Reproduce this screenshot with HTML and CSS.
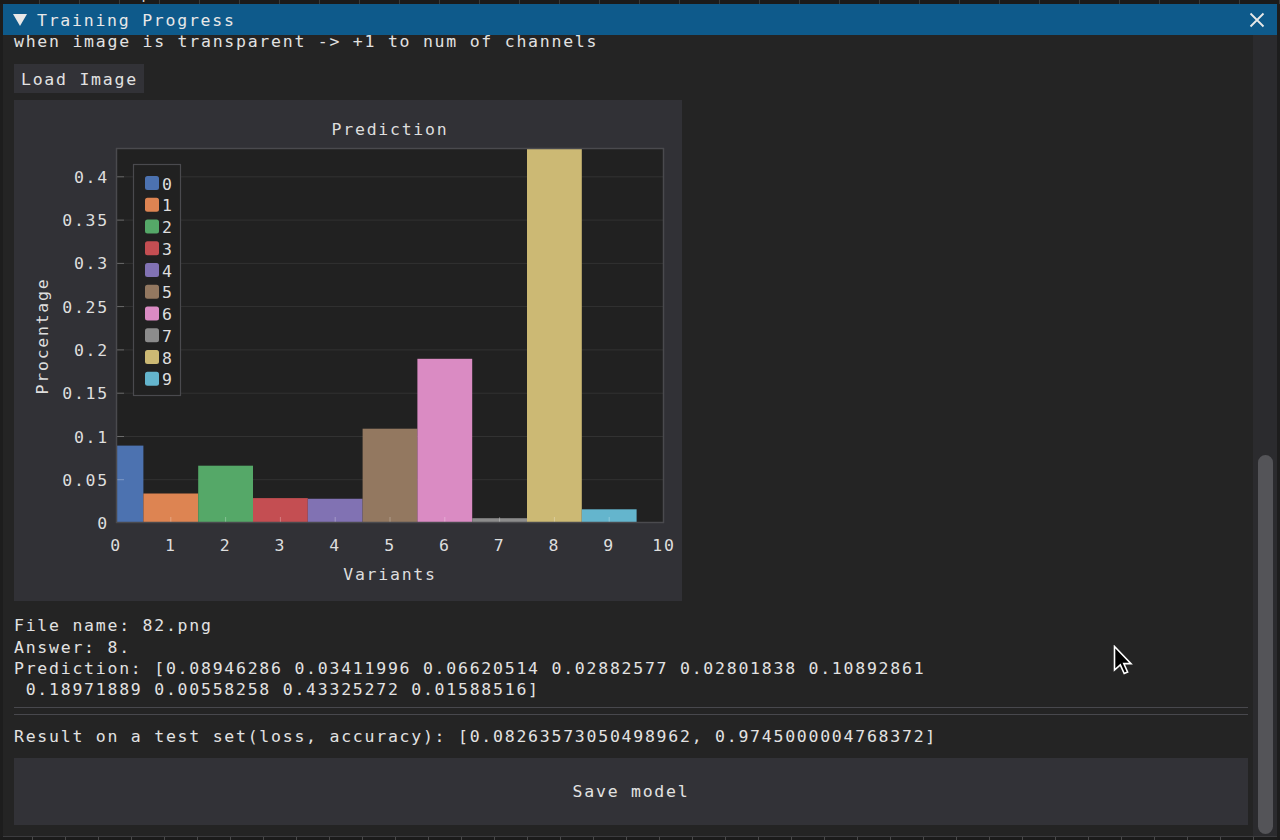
FILE: index.html
```html
<!DOCTYPE html>
<html>
<head>
<meta charset="utf-8">
<title>Training Progress</title>
<link rel="stylesheet" href="styles.css">
</head>
<body>
<div class="desktop">
  <div class="bg-top"><span class="bg-top-label">Input</span></div>
  <div class="window">
    <div class="titlebar">
      <svg class="collapse-icon" width="14" height="12" viewBox="0 0 14 12"><polygon points="0,0 14,0 7,12" fill="#e8e8e8"/></svg>
      <span class="title">Training Progress</span>
      <svg class="close-icon" width="16" height="16" viewBox="0 0 16 16"><path d="M1.5 1.5 L14.5 14.5 M14.5 1.5 L1.5 14.5" stroke="#e8e8e8" stroke-width="1.8" fill="none"/></svg>
    </div>
    <div class="win-body">
      <div class="content">
        <div class="scrolled">
          <p class="line">when image is transparent -&gt; +1 to num of channels</p>
          <button class="btn btn-load">Load Image</button>
          <div class="plot-frame">
            <svg class="plot" width="668" height="501" viewBox="0 0 668 501">
              <defs>
                <clipPath id="area"><rect x="102" y="48" width="548" height="375"/></clipPath>
              </defs>
              <text class="plot-title" x="376" y="29">Prediction</text>
              <rect x="102" y="48" width="548" height="375" fill="#212121"/>
              <g stroke="#323232" stroke-width="1">
                <line x1="102" y1="379.7" x2="650" y2="379.7"/>
                <line x1="102" y1="336.5" x2="650" y2="336.5"/>
                <line x1="102" y1="293.2" x2="650" y2="293.2"/>
                <line x1="102" y1="249.9" x2="650" y2="249.9"/>
                <line x1="102" y1="206.6" x2="650" y2="206.6"/>
                <line x1="102" y1="163.4" x2="650" y2="163.4"/>
                <line x1="102" y1="120.1" x2="650" y2="120.1"/>
                <line x1="102" y1="76.8" x2="650" y2="76.8"/>
              </g>
              <g clip-path="url(#area)">
                <rect x="74.6" y="345.6" width="54.8" height="77.4" fill="#4c72b0"/>
                <rect x="129.4" y="393.5" width="54.8" height="29.5" fill="#dd8452"/>
                <rect x="184.2" y="365.7" width="54.8" height="57.3" fill="#55a868"/>
                <rect x="239" y="398.1" width="54.8" height="24.9" fill="#c44e52"/>
                <rect x="293.8" y="398.75" width="54.8" height="24.25" fill="#8172b3"/>
                <rect x="348.6" y="328.7" width="54.8" height="94.3" fill="#937860"/>
                <rect x="403.4" y="258.8" width="54.8" height="164.2" fill="#da8bc3"/>
                <rect x="458.2" y="418.2" width="54.8" height="4.8" fill="#8c8c8c"/>
                <rect x="513" y="48" width="54.8" height="375" fill="#ccb974"/>
                <rect x="567.8" y="409.3" width="54.8" height="13.7" fill="#64b5cd"/>
              </g>
              <g stroke="rgba(255,255,255,0.28)" stroke-width="1">
                <line x1="102" y1="379.7" x2="110" y2="379.7"/>
                <line x1="102" y1="336.5" x2="110" y2="336.5"/>
                <line x1="102" y1="293.2" x2="110" y2="293.2"/>
                <line x1="102" y1="249.9" x2="110" y2="249.9"/>
                <line x1="102" y1="206.6" x2="110" y2="206.6"/>
                <line x1="102" y1="163.4" x2="110" y2="163.4"/>
                <line x1="102" y1="120.1" x2="110" y2="120.1"/>
                <line x1="102" y1="76.8" x2="110" y2="76.8"/>
                <line x1="156.8" y1="423" x2="156.8" y2="417"/>
                <line x1="211.6" y1="423" x2="211.6" y2="417"/>
                <line x1="266.4" y1="423" x2="266.4" y2="417"/>
                <line x1="321.2" y1="423" x2="321.2" y2="417"/>
                <line x1="376" y1="423" x2="376" y2="417"/>
                <line x1="430.8" y1="423" x2="430.8" y2="417"/>
                <line x1="485.6" y1="423" x2="485.6" y2="417"/>
                <line x1="540.4" y1="423" x2="540.4" y2="417"/>
                <line x1="595.2" y1="423" x2="595.2" y2="417"/>
              </g>
              <rect x="102.5" y="48.5" width="547" height="374" fill="none" stroke="#4a4a4e" stroke-width="1.5"/>
              <g class="legend">
                <rect x="119.5" y="64.5" width="47" height="231" fill="#212121" stroke="#4a4a4e" stroke-width="1.2"/>
                <rect x="131" y="76" width="14" height="14" rx="2.5" fill="#4c72b0"/>
                <rect x="131" y="97.75" width="14" height="14" rx="2.5" fill="#dd8452"/>
                <rect x="131" y="119.5" width="14" height="14" rx="2.5" fill="#55a868"/>
                <rect x="131" y="141.25" width="14" height="14" rx="2.5" fill="#c44e52"/>
                <rect x="131" y="163" width="14" height="14" rx="2.5" fill="#8172b3"/>
                <rect x="131" y="184.75" width="14" height="14" rx="2.5" fill="#937860"/>
                <rect x="131" y="206.5" width="14" height="14" rx="2.5" fill="#da8bc3"/>
                <rect x="131" y="228.25" width="14" height="14" rx="2.5" fill="#8c8c8c"/>
                <rect x="131" y="250" width="14" height="14" rx="2.5" fill="#ccb974"/>
                <rect x="131" y="271.75" width="14" height="14" rx="2.5" fill="#64b5cd"/>
                <text class="lbl" x="148" y="84">0</text>
                <text class="lbl" x="148" y="105.75">1</text>
                <text class="lbl" x="148" y="127.5">2</text>
                <text class="lbl" x="148" y="149.25">3</text>
                <text class="lbl" x="148" y="171">4</text>
                <text class="lbl" x="148" y="192.75">5</text>
                <text class="lbl" x="148" y="214.5">6</text>
                <text class="lbl" x="148" y="236.25">7</text>
                <text class="lbl" x="148" y="258">8</text>
                <text class="lbl" x="148" y="279.75">9</text>
              </g>
              <g class="ylabels">
                <text x="95" y="77.3">0.4</text>
                <text x="95" y="120.6">0.35</text>
                <text x="95" y="163.9">0.3</text>
                <text x="95" y="207.1">0.25</text>
                <text x="95" y="250.4">0.2</text>
                <text x="95" y="293.7">0.15</text>
                <text x="95" y="337">0.1</text>
                <text x="95" y="380.2">0.05</text>
                <text x="95" y="423.5">0</text>
              </g>
              <g class="xlabels">
                <text x="102" y="445.5">0</text>
                <text x="156.8" y="445.5">1</text>
                <text x="211.6" y="445.5">2</text>
                <text x="266.4" y="445.5">3</text>
                <text x="321.2" y="445.5">4</text>
                <text x="376" y="445.5">5</text>
                <text x="430.8" y="445.5">6</text>
                <text x="485.6" y="445.5">7</text>
                <text x="540.4" y="445.5">8</text>
                <text x="595.2" y="445.5">9</text>
                <text x="650" y="445.5">10</text>
              </g>
              <text class="axis-title" x="376" y="474.5">Variants</text>
              <text class="axis-title" x="0" y="0" transform="translate(28 236) rotate(-90)">Procentage</text>
            </svg>
          </div>
          <div class="info">
            <p class="line">File name: 82.png</p>
            <p class="line">Answer: 8.</p>
            <p class="line">Prediction: [0.08946286 0.03411996 0.06620514 0.02882577 0.02801838 0.10892861</p>
            <p class="line pre"> 0.18971889 0.00558258 0.43325272 0.01588516]</p>
          </div>
          <div class="separator"></div>
          <p class="line result">Result on a test set(loss, accuracy): [0.08263573050498962, 0.9745000004768372]</p>
          <button class="btn btn-save">Save model</button>
        </div>
      </div>
      <div class="scrollbar"><div class="thumb"></div></div>
    </div>
  </div>
  <div class="bg-bottom"></div>
</div>
<svg class="cursor" width="20" height="31" viewBox="0 0 20 31"><path d="M1.5 1.5 L1.5 25 L7.3 19.8 L11.2 28.5 L14.6 27 L10.8 18.6 L18 18.6 Z" fill="#000" stroke="#fff" stroke-width="1.6" stroke-linejoin="miter"/></svg>
</body>
</html>
```

FILE: styles.css
```css
html, body {
  margin: 0;
  padding: 0;
}

body {
  width: 1280px;
  height: 840px;
  overflow: hidden;
  background: #1d1d1d;
  font-family: "DejaVu Sans Mono", "Liberation Mono", monospace;
  font-size: 16.5px;
  letter-spacing: 1.75px;
  color: #e2e2e2;
  position: relative;
}

.desktop {
  display: flex;
  flex-direction: column;
  height: 840px;
}

.bg-top {
  height: 4px;
  overflow: hidden;
  background: #1b1b1b;
  background-image: repeating-linear-gradient(90deg, transparent 0 39px, #3a3a3a 39px 40px);
}

.bg-top-label {
  display: block;
  margin-left: 118px;
  margin-top: -15px;
  line-height: 18px;
  color: #cfcfcf;
}

.window {
  margin-left: 3px;
  width: 1274px;
  height: 832px;
  display: flex;
  flex-direction: column;
  background: #242424;
  border-bottom: 1px solid #3c3c3f;
}

.titlebar {
  height: 31px;
  flex: none;
  background: #0e5a8b;
  display: flex;
  align-items: center;
  padding-left: 10px;
  padding-right: 12px;
}

.collapse-icon {
  display: block;
  margin-right: 10px;
  margin-top: 1px;
}

.title {
  flex: 1;
  color: #e8e8e8;
  line-height: 20px;
  padding-top: 2px;
}

.close-icon {
  display: block;
}

.win-body {
  flex: 1;
  display: flex;
  min-height: 0;
}

.content {
  flex: 1;
  overflow: hidden;
  padding-left: 11px;
  padding-right: 5px;
}

.scrolled {
  margin-top: -5px;
  display: flex;
  flex-direction: column;
  align-items: flex-start;
}

.line {
  margin: 0;
  line-height: 23.33px;
  height: 21.33px;
  white-space: pre;
}

.btn {
  font: inherit;
  letter-spacing: inherit;
  color: #e2e2e2;
  background: #323237;
  border: none;
  border-radius: 0;
  padding: 0;
  margin: 0;
  display: flex;
  align-items: center;
}

.btn-load {
  margin-top: 12.7px;
  height: 29px;
  width: 130px;
  padding-left: 7px;
  padding-top: 1px;
}

.plot-frame {
  margin-top: 7px;
  width: 668px;
  height: 501px;
  background: #313136;
}

.plot {
  display: block;
}

.plot text {
  font-family: "DejaVu Sans Mono", "Liberation Mono", monospace;
  font-size: 16.5px;
  letter-spacing: 1.75px;
  fill: #dedede;
  dominant-baseline: central;
}

.plot-title,
.axis-title {
  text-anchor: middle;
}

.ylabels text {
  text-anchor: end;
}

.xlabels text {
  text-anchor: middle;
}

.info {
  margin-top: 13.3px;
}

.separator {
  margin-top: 7.4px;
  width: 1234px;
  height: 8px;
  box-sizing: border-box;
  border-top: 1px solid #48484d;
  border-bottom: 1px solid #48484d;
}

.result {
  margin-top: 10.3px;
}

.btn-save {
  margin-top: 11.3px;
  width: 1234px;
  height: 67px;
  justify-content: center;
  padding-top: 1px;
}

.scrollbar {
  width: 24px;
  flex: none;
  background: #2b2b2e;
  display: flex;
  flex-direction: column;
  justify-content: flex-end;
  align-items: center;
  padding-bottom: 2px;
}

.thumb {
  width: 15px;
  height: 379px;
  border-radius: 8px;
  background: #545458;
}

.bg-bottom {
  flex: 1;
  background: #1b1b1b;
  background-image: repeating-linear-gradient(90deg, transparent 0 32px, #4a4a4a 32px 33px);
}

.cursor {
  position: absolute;
  left: 1113px;
  top: 645px;
}
```
